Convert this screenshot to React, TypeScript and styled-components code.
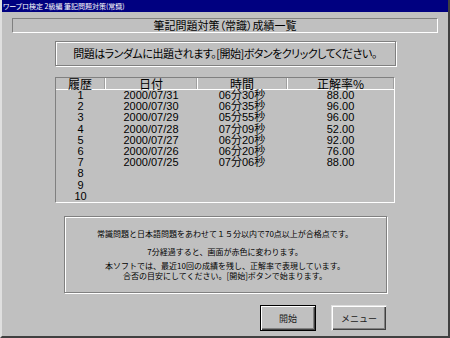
import React from 'react';
import styled, { createGlobalStyle } from 'styled-components';

const GlobalStyle = createGlobalStyle`
  html, body {
    margin: 0;
    padding: 0;
    background: #c0c0c0;
  }
  * {
    box-sizing: border-box;
  }
`;

const JP = `"Noto Sans CJK JP", "Noto Sans", sans-serif`;
const NUM = `"Liberation Sans", "Noto Sans CJK JP", sans-serif`;

const Window = styled.div`
  width: 450px;
  height: 338px;
  background: #c0c0c0;
  border-left: 2px solid #dfdfdf;
  border-right: 2px solid #404040;
  border-bottom: 2px solid #404040;
  display: flex;
  flex-direction: column;
  align-items: center;
  font-family: ${JP};
  color: #000;
  overflow: hidden;
`;

const TitleBar = styled.div`
  align-self: stretch;
  height: 12px;
  background: #000080;
  color: #fff;
  font-size: 7px;
  line-height: 12px;
  padding-left: 1px;
  white-space: nowrap;
  font-feature-settings: 'palt';
`;

const Heading = styled.div`
  margin-top: 6px;
  width: 426px;
  height: 15px;
  border-top: 1px solid #808080;
  border-left: 1px solid #808080;
  border-right: 1px solid #fff;
  border-bottom: 1px solid #fff;
  font-size: 11px;
  line-height: 13px;
  text-align: center;
  font-feature-settings: 'palt';
`;

const Etched = styled.div<{ $w: number; $h: number }>`
  width: ${(p) => p.$w}px;
  height: ${(p) => p.$h}px;
  border: 1px solid #808080;
  box-shadow: 1px 1px 0 #fff, inset 1px 1px 0 #fff;
`;

const Notice = styled(Etched)`
  margin-top: 8px;
  font-size: 11px;
  letter-spacing: -0.5px;
  line-height: 22px;
  text-align: center;
  white-space: nowrap;
  font-feature-settings: 'palt';
`;

const Table = styled.div`
  margin-top: 11px;
  width: 340px;
  height: 126px;
  border-top: 1px solid #808080;
  border-left: 1px solid #808080;
  border-right: 1px solid #fff;
  border-bottom: 1px solid #fff;
`;

const Row = styled.div<{ $head?: boolean }>`
  display: grid;
  grid-template-columns: 49px 92px 90px 107px;
  height: ${(p) => (p.$head ? '12px' : '11.2px')};
  line-height: ${(p) => (p.$head ? '11px' : '11.2px')};
  border-bottom: ${(p) => (p.$head ? '1px solid #fff' : 'none')};
  font-family: ${(p) => (p.$head ? JP : NUM)};
  font-size: ${(p) => (p.$head ? '12px' : '11px')};
`;

const Cell = styled.div<{ $head?: boolean; $first?: boolean }>`
  text-align: center;
  white-space: nowrap;
  border-left: ${(p) => (p.$head && !p.$first ? '1px solid #fff' : 'none')};
  border-right: ${(p) => (p.$head ? '1px solid #a0a0a0' : 'none')};
`;

const Info = styled(Etched)`
  margin-top: 13px;
  font-size: 8px;
  line-height: 10px;
  text-align: center;
  padding-top: 12px;
  white-space: nowrap;
`;

const InfoLine = styled.div<{ $gap: number }>`
  margin-top: ${(p) => p.$gap}px;
`;

const ButtonRow = styled.div`
  align-self: stretch;
  display: flex;
  justify-content: flex-end;
  gap: 15px;
  padding-right: 61px;
  margin-top: 12px;
`;

const Button = styled.button<{ $default?: boolean }>`
  width: 56px;
  height: 26px;
  padding: 0;
  background: #c0c0c0;
  font-family: ${JP};
  font-size: 9px;
  color: #202020;
  border: 1px solid ${(p) => (p.$default ? '#000' : '#dfdfdf')};
  border-right-color: ${(p) => (p.$default ? '#000' : '#c0c0c0')};
  border-bottom-color: ${(p) => (p.$default ? '#000' : '#c0c0c0')};
  box-shadow: inset 1px 1px 0 #fff, inset -1px -1px 0 #404040, inset -2px -2px 0 #808080;
`;

const history = [
  ['1', '2000/07/31', '06分30秒', '88.00'],
  ['2', '2000/07/30', '06分35秒', '96.00'],
  ['3', '2000/07/29', '05分55秒', '96.00'],
  ['4', '2000/07/28', '07分09秒', '52.00'],
  ['5', '2000/07/27', '06分20秒', '92.00'],
  ['6', '2000/07/26', '06分20秒', '76.00'],
  ['7', '2000/07/25', '07分06秒', '88.00'],
  ['8', '', '', ''],
  ['9', '', '', ''],
  ['10', '', '', ''],
];

export default function App() {
  return (
    <>
      <GlobalStyle />
      <Window>
        <TitleBar>ワープロ検定 2級編 筆記問題対策(常識)</TitleBar>
        <Heading>筆記問題対策（常識）成績一覧</Heading>
        <Notice $w={341} $h={25}>
          問題はランダムに出題されます。[開始]ボタンをクリックしてください。
        </Notice>
        <Table>
          <Row $head>
            <Cell $head $first>履歴</Cell>
            <Cell $head>日付</Cell>
            <Cell $head>時間</Cell>
            <Cell $head>正解率%</Cell>
          </Row>
          {history.map((r) => (
            <Row key={r[0]}>
              {r.map((c, i) => (
                <Cell key={i}>{c}</Cell>
              ))}
            </Row>
          ))}
        </Table>
        <Info $w={323} $h={77}>
          <InfoLine $gap={0}>常識問題と日本語問題をあわせて１５分以内で70点以上が合格点です。</InfoLine>
          <InfoLine $gap={8}>7分経過すると、画面が赤色に変わります。</InfoLine>
          <InfoLine $gap={4}>本ソフトでは、最近10回の成績を残し、正解率で表現しています。</InfoLine>
          <InfoLine $gap={0}>合否の目安にしてください。[開始]ボタンで始まります。</InfoLine>
        </Info>
        <ButtonRow>
          <Button $default>開始</Button>
          <Button>メニュー</Button>
        </ButtonRow>
      </Window>
    </>
  );
}
